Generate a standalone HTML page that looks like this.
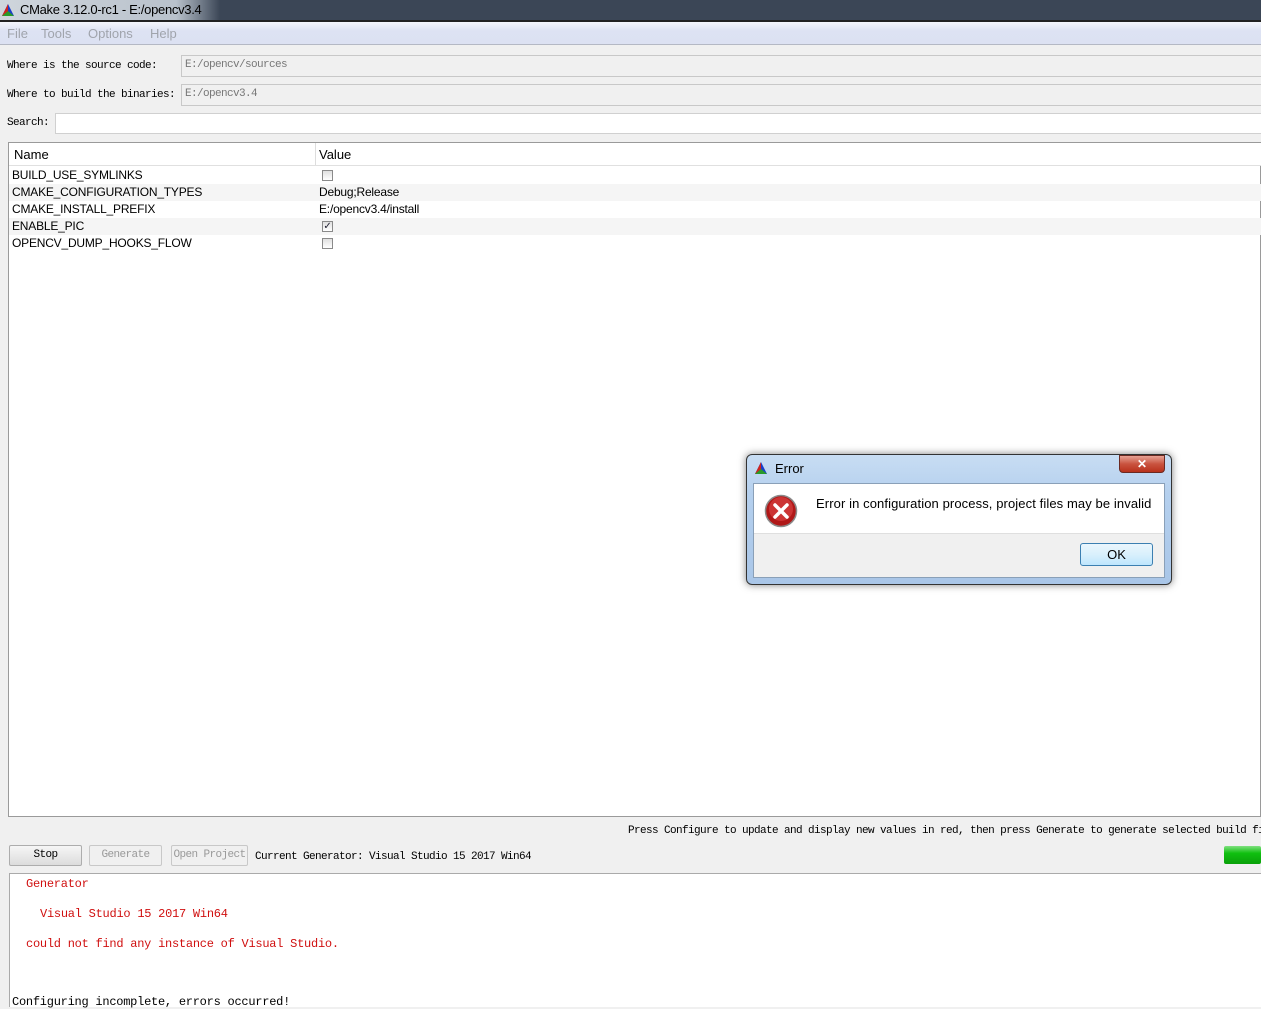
<!DOCTYPE html>
<html><head><meta charset="utf-8"><style>
body{margin:0;width:1261px;height:1006px;overflow:hidden;background:#f0f0f0;position:relative;font-family:"Liberation Sans",sans-serif}
.a{position:absolute}
.mono{font-family:"Liberation Mono","Noto Sans CJK SC",monospace;font-size:11px;letter-spacing:-0.6px;white-space:pre;overflow:hidden}
.log{font-family:"Liberation Mono","Noto Sans CJK SC",monospace;font-size:12px;letter-spacing:-0.25px;white-space:pre}
.row{position:absolute;left:9px;width:1252px;height:17px;font-size:12px;line-height:17px;color:#000;letter-spacing:-0.2px}
.cb{position:absolute;left:322px;top:3px;width:11px;height:11px;border:1px solid #8a8a8a;background:linear-gradient(#e0e0e0,#fff);box-sizing:border-box}
.btn{position:absolute;top:845px;height:21px;border:1px solid #adadad;border-radius:2px;background:linear-gradient(#f6f6f6,#dcdcdc);box-sizing:border-box;text-align:center;line-height:19px}
.m{position:absolute;top:26px;font-size:13px;color:#a0a4ac}
</style></head><body>
<div class="a" style="left:0;top:0;width:1261px;height:20px;background:#3b4656"></div>
<div class="a" style="left:0;top:0;width:220px;height:20px;background:linear-gradient(90deg,#cfd5dc,#b9c2cc 80%,#3b4656)"></div>
<svg class="a" style="left:1px;top:3px" width="14" height="14"><polygon points="7,1 13,13 1,13" fill="#1a3fc9"/><polygon points="7,1 7,13 1,13" fill="#d0241d"/><polygon points="7,8 13,13 1,13" fill="#2a9a2a"/></svg>
<div class="a" style="left:20px;top:2px;font-size:13px;color:#000;letter-spacing:-0.3px">CMake 3.12.0-rc1 - E:/opencv3.4</div>
<div class="a" style="left:0;top:20px;width:1261px;height:2px;background:#222"></div>
<div class="a" style="left:0;top:22px;width:1261px;height:22px;background:linear-gradient(#f4f6fc,#dde2f3 40%,#dce1f2);border-bottom:1px solid #b4b8c4"></div>
<div class="m" style="left:7px">File</div><div class="m" style="left:41px">Tools</div><div class="m" style="left:88px">Options</div><div class="m" style="left:150px">Help</div>
<div class="a mono" style="left:7px;top:60px">Where is the source code:</div>
<div class="a" style="left:181px;top:55px;width:1080px;height:20px;border:1px solid #c8c8c8;background:#f0f0f0"></div>
<div class="a mono" style="left:185px;top:59px;color:#777">E:/opencv/sources</div>
<div class="a mono" style="left:7px;top:89px">Where to build the binaries:</div>
<div class="a" style="left:181px;top:84px;width:1080px;height:20px;border:1px solid #c8c8c8;background:#f0f0f0"></div>
<div class="a mono" style="left:185px;top:88px;color:#777">E:/opencv3.4</div>
<div class="a mono" style="left:7px;top:117px">Search:</div>
<div class="a" style="left:55px;top:113px;width:1206px;height:19px;border:1px solid #d0d0d0;background:#fff"></div>
<div class="a" style="left:8px;top:142px;width:1253px;height:675px;border:1px solid #9a9a9a;background:#fff;box-sizing:border-box"></div>
<div class="a" style="left:9px;top:143px;width:1252px;height:22px;background:#fff;border-bottom:1px solid #e0e0e0"></div>
<div class="a" style="left:315px;top:143px;width:1px;height:22px;background:#ddd"></div>
<div class="a" style="left:14px;top:147px;font-size:13px">Name</div>
<div class="a" style="left:319px;top:147px;font-size:13px">Value</div>
<div class="row" style="top:167px"><span class="a" style="left:3px">BUILD_USE_SYMLINKS</span><div class="cb" style="left:313px"></div></div>
<div class="row" style="top:184px;background:#f5f5f5"><span class="a" style="left:3px">CMAKE_CONFIGURATION_TYPES</span><span class="a" style="left:310px">Debug;Release</span></div>
<div class="row" style="top:201px"><span class="a" style="left:3px">CMAKE_INSTALL_PREFIX</span><span class="a" style="left:310px">E:/opencv3.4/install</span></div>
<div class="row" style="top:218px;background:#f5f5f5"><span class="a" style="left:3px">ENABLE_PIC</span><div class="cb" style="left:313px;font-size:10px;line-height:9px;text-align:center;color:#223">✓</div></div>
<div class="row" style="top:235px"><span class="a" style="left:3px">OPENCV_DUMP_HOOKS_FLOW</span><div class="cb" style="left:313px"></div></div>
<div class="a mono" style="left:628px;top:825px;width:633px">Press Configure to update and display new values in red, then press Generate to generate selected build fi</div>
<div class="btn mono" style="left:9px;width:73px">Stop</div>
<div class="btn mono" style="left:89px;width:73px;color:#999;background:#f0f0f0;border-color:#c8c8c8">Generate</div>
<div class="btn mono" style="left:171px;width:77px;color:#999;background:#f0f0f0;border-color:#c8c8c8">Open Project</div>
<div class="a mono" style="left:255px;top:851px">Current Generator: Visual Studio 15 2017 Win64</div>
<div class="a" style="left:1224px;top:846px;width:37px;height:18px;background:linear-gradient(#7fe07f,#10c010 40%,#0aa00a);border-radius:2px"></div>
<div class="a" style="left:9px;top:873px;width:1252px;height:133px;background:#fff;border-top:1px solid #aaa;border-left:1px solid #aaa"></div>
<div class="a log" style="left:26px;top:877px;color:#d01010">Generator</div>
<div class="a log" style="left:40px;top:907px;color:#d01010">Visual Studio 15 2017 Win64</div>
<div class="a log" style="left:26px;top:937px;color:#d01010">could not find any instance of Visual Studio.</div>
<div class="a log" style="left:12px;top:995px">Configuring incomplete, errors occurred!</div>
<div class="a" style="left:746px;top:454px;width:426px;height:131px;border:1px solid #333;border-radius:6px;background:linear-gradient(#c8ddf3,#b5d0ee 30%,#a9c6e8);box-shadow:0 0 8px rgba(0,0,0,.5);box-sizing:border-box"></div>
<svg class="a" style="left:754px;top:461px" width="14" height="14"><polygon points="7,1 13,13 1,13" fill="#1a3fc9"/><polygon points="7,1 7,13 1,13" fill="#d0241d"/><polygon points="7,8 13,13 1,13" fill="#2a9a2a"/></svg>
<div class="a" style="left:775px;top:461px;font-size:13px">Error</div>
<div class="a" style="left:1119px;top:455px;width:46px;height:18px;border:1px solid #6b2a22;border-radius:0 0 4px 4px;background:linear-gradient(#e8a294,#c9533f 50%,#b8321c);color:#fff;text-align:center;font-size:12px;font-weight:bold;line-height:16px;box-sizing:border-box">✕</div>
<div class="a" style="left:753px;top:483px;width:412px;height:95px;border:1px solid #8aa0b8;background:#f0f0f0;box-sizing:border-box"></div>
<div class="a" style="left:754px;top:484px;width:410px;height:49px;background:#fff;border-bottom:1px solid #dfdfdf"></div>
<svg class="a" style="left:764px;top:494px" width="34" height="34"><circle cx="17" cy="17" r="15.5" fill="#b01818" stroke="#8a8a8a" stroke-width="1.5"/><circle cx="17" cy="15" r="12" fill="#d84040" opacity=".7"/><path d="M11 11 L23 23 M23 11 L11 23" stroke="#fff" stroke-width="3.5" stroke-linecap="round"/></svg>
<div class="a" style="left:816px;top:496px;font-size:13px;letter-spacing:0.1px">Error in configuration process, project files may be invalid</div>
<div class="a" style="left:1080px;top:543px;width:73px;height:23px;border:1px solid #3c7fb1;border-radius:3px;background:linear-gradient(#eaf6fd,#d9f0fc 50%,#bee6fd);box-sizing:border-box;text-align:center;line-height:21px;font-size:13px">OK</div>
</body></html>
